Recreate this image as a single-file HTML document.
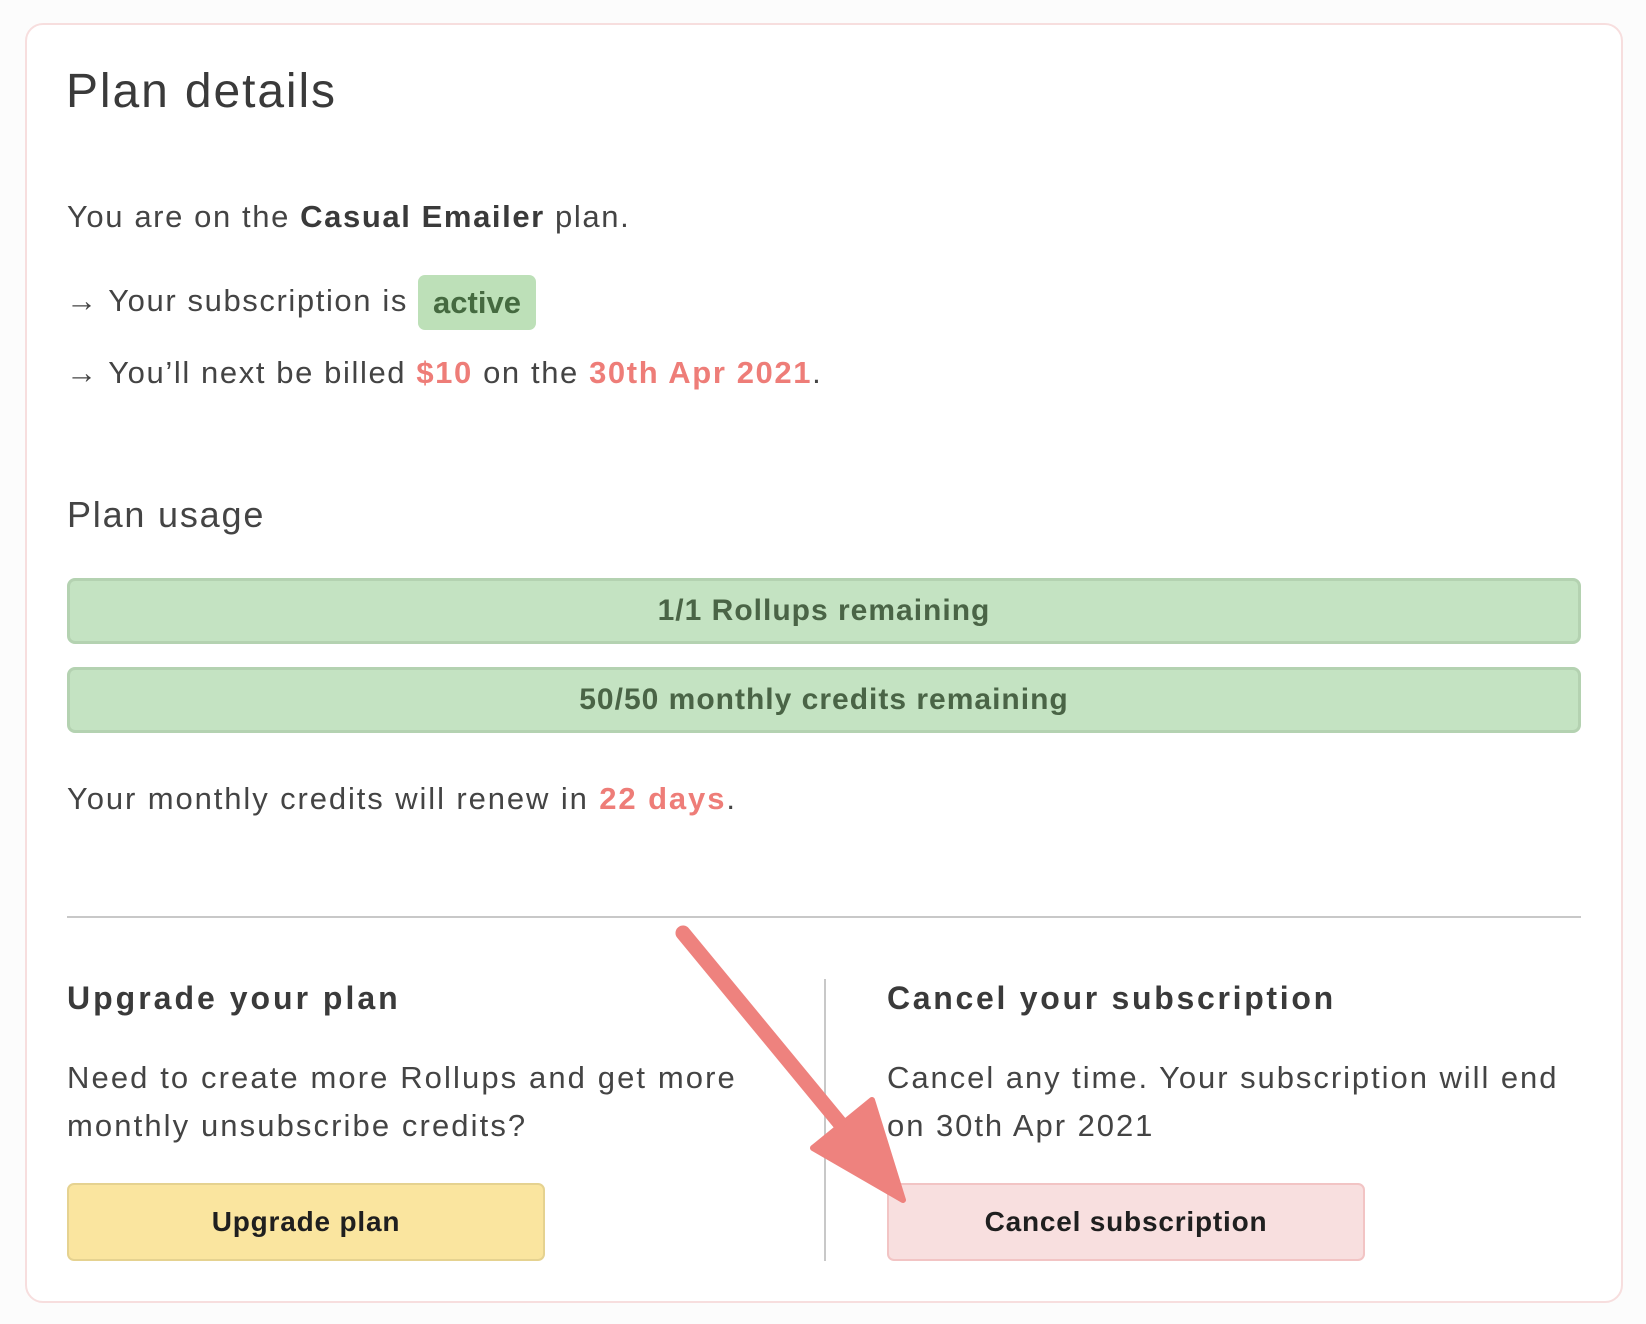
<!DOCTYPE html>
<html><head><meta charset="utf-8"><style>
*{margin:0;padding:0;box-sizing:border-box}
body{width:1646px;height:1324px;background:#fcfcfc;font-family:"Liberation Sans",sans-serif;color:#444;position:relative;overflow:hidden}
.card{position:absolute;left:25px;top:23px;width:1598px;height:1280px;background:#fff;border:2px solid #f7dede;border-radius:18px}
.t{position:absolute;white-space:nowrap}
.red{color:#ee7d78;font-weight:bold}
.bar{position:absolute;left:67px;width:1514px;height:66px;background:#c4e3c2;border:3px solid #b4d2b1;border-radius:8px;text-align:center;line-height:60px;font-size:30px;font-weight:bold;color:#4a6446;letter-spacing:1px}
.btn{position:absolute;top:1183px;width:478px;height:78px;border-radius:7px;text-align:center;line-height:74px;font-size:28px;font-weight:bold;color:#1f1f1f;letter-spacing:0.8px}
</style></head><body>
<div class="card"></div>
<div class="t" style="left:66px;top:64px;font-size:48px;line-height:56px;color:#3a3a3a;letter-spacing:1.9px">Plan details</div>
<div class="t" style="left:67px;top:198px;font-size:31px;line-height:38px;letter-spacing:1.6px">You are on the <b style="color:#3a3a3a">Casual Emailer</b> plan.</div>
<div class="t" style="left:66px;top:282px;font-size:31px;line-height:38px;letter-spacing:1.6px">→ Your subscription is</div>
<div class="t" style="left:418px;top:275px;width:118px;height:55px;background:#bde0b8;border-radius:7px;font-size:31px;font-weight:bold;color:#456a40;text-align:center;line-height:55px">active</div>
<div class="t" style="left:66px;top:354px;font-size:31px;line-height:38px;letter-spacing:1.6px">→ You’ll next be billed <span class="red">$10</span> on the <span class="red">30th Apr 2021</span>.</div>
<div class="t" style="left:67px;top:494px;font-size:36px;line-height:42px;letter-spacing:1.8px">Plan usage</div>
<div class="bar" style="top:578px">1/1 Rollups remaining</div>
<div class="bar" style="top:667px">50/50 monthly credits remaining</div>
<div class="t" style="left:67px;top:780px;font-size:31px;line-height:38px;letter-spacing:1.9px">Your monthly credits will renew in <span class="red">22 days</span>.</div>
<div style="position:absolute;left:67px;top:916px;width:1514px;height:2px;background:#c8c8c8"></div>
<div style="position:absolute;left:824px;top:979px;width:2px;height:282px;background:#c8c8c8"></div>
<div class="t" style="left:67px;top:978px;font-size:32px;line-height:40px;font-weight:bold;color:#3a3a3a;letter-spacing:3px">Upgrade your plan</div>
<div class="t" style="left:67px;top:1054px;font-size:31px;line-height:48px;letter-spacing:2.1px">Need to create more Rollups and get more<br>monthly unsubscribe credits?</div>
<div class="t" style="left:887px;top:978px;font-size:32px;line-height:40px;font-weight:bold;color:#3a3a3a;letter-spacing:2.7px">Cancel your subscription</div>
<div class="t" style="left:887px;top:1054px;font-size:31px;line-height:48px;letter-spacing:1.95px">Cancel any time. Your subscription will end<br>on 30th Apr 2021</div>
<div class="btn" style="left:67px;background:#fae59f;border:2px solid #e5d290">Upgrade plan</div>
<div class="btn" style="left:887px;background:#f8dfdf;border:2px solid #f2c4c4">Cancel subscription</div>
<svg style="position:absolute;left:0;top:0" width="1646" height="1324">
<line x1="683" y1="933" x2="862" y2="1150" stroke="#ee827e" stroke-width="15" stroke-linecap="round"/>
<polygon points="813,1148 872,1100 903,1200" fill="#ee827e" stroke="#ee827e" stroke-width="6" stroke-linejoin="round"/>
</svg>
</body></html>
